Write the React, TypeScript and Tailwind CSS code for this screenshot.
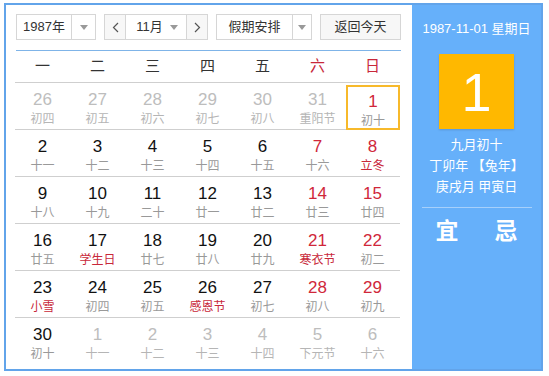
import React from 'react';

type Day = {
    n: number;
    lunar: string;
    muted?: boolean;
    red?: boolean;
    redLunar?: boolean;
    selected?: boolean;
};

const weekdays = ['一', '二', '三', '四', '五', '六', '日'];

const weeks: Day[][] = [
    [
        { n: 26, lunar: '初四', muted: true },
        { n: 27, lunar: '初五', muted: true },
        { n: 28, lunar: '初六', muted: true },
        { n: 29, lunar: '初七', muted: true },
        { n: 30, lunar: '初八', muted: true },
        { n: 31, lunar: '重阳节', muted: true },
        { n: 1, lunar: '初十', red: true, selected: true },
    ],
    [
        { n: 2, lunar: '十一' },
        { n: 3, lunar: '十二' },
        { n: 4, lunar: '十三' },
        { n: 5, lunar: '十四' },
        { n: 6, lunar: '十五' },
        { n: 7, lunar: '十六', red: true },
        { n: 8, lunar: '立冬', red: true, redLunar: true },
    ],
    [
        { n: 9, lunar: '十八' },
        { n: 10, lunar: '十九' },
        { n: 11, lunar: '二十' },
        { n: 12, lunar: '廿一' },
        { n: 13, lunar: '廿二' },
        { n: 14, lunar: '廿三', red: true },
        { n: 15, lunar: '廿四', red: true },
    ],
    [
        { n: 16, lunar: '廿五' },
        { n: 17, lunar: '学生日', redLunar: true },
        { n: 18, lunar: '廿七' },
        { n: 19, lunar: '廿八' },
        { n: 20, lunar: '廿九' },
        { n: 21, lunar: '寒衣节', red: true, redLunar: true },
        { n: 22, lunar: '初二', red: true },
    ],
    [
        { n: 23, lunar: '小雪', redLunar: true },
        { n: 24, lunar: '初四' },
        { n: 25, lunar: '初五' },
        { n: 26, lunar: '感恩节', redLunar: true },
        { n: 27, lunar: '初七' },
        { n: 28, lunar: '初八', red: true },
        { n: 29, lunar: '初九', red: true },
    ],
    [
        { n: 30, lunar: '初十' },
        { n: 1, lunar: '十一', muted: true },
        { n: 2, lunar: '十二', muted: true },
        { n: 3, lunar: '十三', muted: true },
        { n: 4, lunar: '十四', muted: true },
        { n: 5, lunar: '下元节', muted: true },
        { n: 6, lunar: '十六', muted: true },
    ],
];

const Caret = () => (
    <svg width="8" height="5" viewBox="0 0 8 5">
        <path d="M0 0h8L4 5z" fill="#999" />
    </svg>
);

const Chevron = ({ dir }: { dir: 'l' | 'r' }) => (
    <svg width="7" height="11" viewBox="0 0 7 11">
        <path d={dir === 'l' ? 'M6 1L1.5 5.5 6 10' : 'M1 1l4.5 4.5L1 10'} fill="none" stroke="#555" strokeWidth="1.2" />
    </svg>
);

const DayCell = ({ d }: { d: Day }) => {
    const numColor = d.muted ? 'text-[#bdbdbd]' : d.red ? 'text-[#d0273a]' : 'text-[#111]';
    const lunarColor = d.muted ? 'text-[#b5b5b5]' : d.redLunar ? 'text-[#c8283a]' : 'text-[#999]';
    return (
        <div className="h-[46px] flex items-stretch">
            <div
                className={
                    'flex-1 flex flex-col items-center ' +
                    (d.selected ? 'border-2 border-[#f7b92b] mt-[2px] mb-[-1px] ml-[1px] pt-[5px]' : 'pt-[7px]')
                }
            >
                <span className={'text-[17px] leading-[20px] ' + numColor}>{d.n}</span>
                <span className={'text-[12px] leading-[16px] mt-[1px] ' + lunarColor}>{d.lunar}</span>
            </div>
        </div>
    );
};

export default function App() {
    return (
        <div
            className="bg-white w-[549px] h-[376px] pl-[4px] pt-[3px]"
            style={{ fontFamily: '"Liberation Sans", "Noto Sans CJK SC", sans-serif' }}
        >
            <div className="w-[539px] h-[368px] border-2 border-[#62a4ea] flex">
                <div className="w-[406px] bg-white pl-[9px] pt-[9px]">
                    <div className="flex items-center h-[26px] pl-[1px] text-[13px] text-[#333]">
                        <div className="w-[80px] h-[26px] border border-[#d6d6d6] flex">
                            <div className="flex-1 flex items-center justify-center">1987年</div>
                            <div className="w-[24px] border-l border-[#d6d6d6] flex items-center justify-center">
                                <Caret />
                            </div>
                        </div>
                        <div className="ml-[8px] w-[104px] h-[26px] border border-[#d6d6d6] flex">
                            <div className="w-[21px] bg-[#f7f7f7] border-r border-[#d6d6d6] flex items-center justify-center">
                                <Chevron dir="l" />
                            </div>
                            <div className="flex-1 flex items-center justify-center gap-[7px] pl-[2px]">
                                <span>11月</span>
                                <Caret />
                            </div>
                            <div className="w-[21px] bg-[#f7f7f7] border-l border-[#d6d6d6] flex items-center justify-center">
                                <Chevron dir="r" />
                            </div>
                        </div>
                        <div className="ml-[8px] w-[96px] h-[26px] border border-[#d6d6d6] flex">
                            <div className="flex-1 flex items-center justify-center">假期安排</div>
                            <div className="w-[19px] border-l border-[#d6d6d6] flex items-center justify-center">
                                <Caret />
                            </div>
                        </div>
                        <div className="ml-[8px] w-[81px] h-[26px] border border-[#d6d6d6] bg-[#f7f7f7] flex items-center justify-center">
                            返回今天
                        </div>
                    </div>
                    <div className="w-[385px] mt-[10px] ml-[1px] border-t border-[#7fb4e8]" />
                    <div className="w-[385px] grid grid-cols-7 h-[32px] items-center border-b border-[#cfcfcf] text-[15px]">
                        {weekdays.map((w, i) => (
                            <div key={w} className={'text-center ' + (i >= 5 ? 'text-[#c8283a]' : 'text-[#333]')}>
                                {w}
                            </div>
                        ))}
                    </div>
                    {weeks.map((week, wi) => (
                        <div
                            key={wi}
                            className={
                                'w-[385px] grid grid-cols-7 ' + (wi < weeks.length - 1 ? 'border-b border-[#cfcfcf]' : '')
                            }
                        >
                            {week.map((d, di) => (
                                <DayCell key={di} d={d} />
                            ))}
                        </div>
                    ))}
                </div>
                <div className="flex-1 bg-[#66b0fa] flex flex-col items-center text-white">
                    <div className="mt-[15px] text-[13px] leading-[18px]">1987-11-01 星期日</div>
                    <div className="mt-[16px] w-[75px] h-[75px] bg-[#ffb800] shadow-[0_1px_2px_rgba(0,0,0,0.15)] flex items-center justify-center text-[54px] leading-none">
                        1
                    </div>
                    <div className="mt-[5px] text-[13px] leading-[21px]">九月初十</div>
                    <div className="text-[13px] leading-[21px]">丁卯年 【兔年】</div>
                    <div className="text-[13px] leading-[22px]">庚戌月 甲寅日</div>
                    <div className="mt-[9px] w-[110px] border-t border-[#a6d0fb]" />
                    <div className="mt-[9px] flex gap-[36px] text-[23px] font-bold leading-[28px]">
                        <span>宜</span>
                        <span>忌</span>
                    </div>
                </div>
            </div>
        </div>
    );
}
